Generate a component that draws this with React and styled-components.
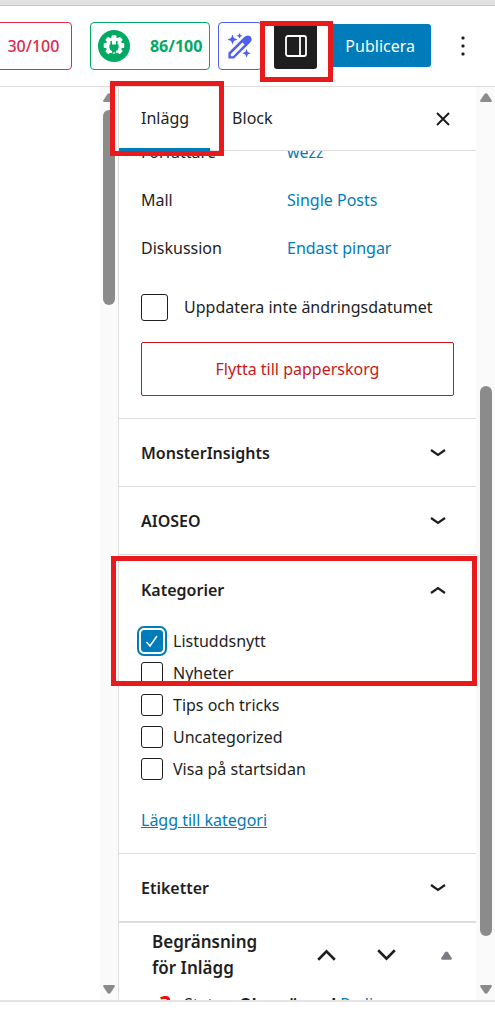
import React, { useState } from "react"
import styled, { createGlobalStyle, css } from "styled-components"

const BLUE = "#007cba"
const INK = "#1e1e1e"
const LINE = "#dddddd"
const MARK = "#e81a1c"

const GlobalStyle = createGlobalStyle`
  * {
    box-sizing: border-box;
  }
  body {
    margin: 0;
    background-color: white;
    color: ${INK};
    font-family: "Noto Sans", "Open Sans", sans-serif;
    font-size: 16px;
    line-height: 24px;
  }
  button {
    font: inherit;
    color: inherit;
    background: none;
    border: 0;
    padding: 0;
    cursor: pointer;
  }
  a {
    color: ${BLUE};
  }
`

const Page = styled.div`
  display: flex;
  flex-direction: column;
  height: 100vh;
  padding-bottom: 22px;
  overflow: hidden;
`

const Toolbar = styled.header`
  display: flex;
  flex-shrink: 0;
  align-items: center;
  justify-content: flex-end;
  gap: 12px;
  height: 87px;
  padding-right: 12px;
  border-top: 5px solid #e1e1e1;
  border-bottom: 1px solid ${LINE};
  box-shadow: inset 0 1px 0 #c8c8c8;
  > * {
    flex-shrink: 0;
  }
`

const Scores = styled.div`
  display: flex;
  gap: 18px;
`

const ScoreGroup = styled.div`
  display: flex;
  gap: 8px;
`

const ScoreButton = styled.button`
  display: flex;
  align-items: center;
  justify-content: ${({ $end }) => ($end ? "flex-end" : "space-between")};
  width: ${({ $narrow }) => ($narrow ? "44px" : "120px")};
  height: 48px;
  padding: 0 ${({ $end }) => ($end ? "12px" : "7px")};
  color: ${({ $color }) => $color};
  border: 1px solid ${({ $color }) => $color};
  border-radius: 4px;
  font-weight: ${({ $bold }) => ($bold ? 700 : 500)};
  svg {
    flex-shrink: 0;
  }
`

const MarkedItem = styled.div`
  position: relative;
  display: flex;
`

const Marker = styled.span`
  position: absolute;
  z-index: 2;
  inset: ${({ $inset }) => $inset};
  ${({ $height }) => $height && css`
    height: ${$height};
  `}
  border: 5px solid ${MARK};
  pointer-events: none;
`

const SettingsToggle = styled.button`
  display: flex;
  align-items: center;
  justify-content: center;
  width: 43px;
  height: 46px;
  border-radius: 3px;
  color: white;
  background-color: ${INK};
`

const PublishButton = styled.button`
  height: 43px;
  padding: 0 16px;
  border-radius: 3px;
  color: white;
  background-color: ${BLUE};
`

const IconButton = styled.button`
  display: flex;
  align-items: center;
  justify-content: center;
  width: 40px;
  height: 40px;
`

const Workspace = styled.main`
  display: flex;
  flex: 1;
  min-height: 0;
  border-bottom: 2px solid #e4e4e4;
`

const Canvas = styled.section`
  flex: 1;
`

const Track = styled.div`
  display: flex;
  flex-direction: column;
  flex-shrink: 0;
  align-items: center;
  width: ${({ $width }) => $width};
  padding: 6px 0;
  background-color: #fafafa;
`

const Thumb = styled.div`
  width: 12px;
  border-radius: 6px;
  background-color: #8b8b8b;
`

const Space = styled.div``

const Sidebar = styled.aside`
  display: flex;
  flex-direction: column;
  width: 358px;
  flex-shrink: 0;
  border-left: 1px solid ${LINE};
`

const TabBar = styled.div`
  display: flex;
  align-items: stretch;
  flex-shrink: 0;
  height: 64px;
  padding-right: 13px;
  border-bottom: 1px solid ${LINE};
`

const Tab = styled.button`
  height: 64px;
  padding: 0 21px 0 22px;
  border-bottom: 3px solid ${({ $active }) => ($active ? BLUE : "transparent")};
`

const CloseButton = styled(IconButton)`
  align-self: center;
  margin-left: auto;
`

const Scroller = styled.div`
  flex: 1;
  min-height: 0;
  overflow-y: clip;
`

const Summary = styled.section`
  margin-top: -23px;
  padding: 0 22px 22px;
`

const SummaryRow = styled.div`
  display: flex;
  align-items: center;
  height: 48px;
`

const SummaryLabel = styled.span`
  width: 146px;
`

const SummaryLink = styled.a`
  text-decoration: none;
`

const Check = styled.label`
  display: flex;
  align-items: center;
  gap: ${({ $large }) => ($large ? "16px" : "10px")};
  height: ${({ $large }) => ($large ? "70px" : "32px")};
`

const Box = styled.input`
  appearance: none;
  flex-shrink: 0;
  width: ${({ $large }) => ($large ? "27px" : "22px")};
  height: ${({ $large }) => ($large ? "27px" : "22px")};
  margin: 0;
  border: 1px solid ${INK};
  border-radius: 3px;
  background-color: white;
  &:checked {
    border-color: ${BLUE};
    background: ${BLUE}
      url("data:image/svg+xml,%3Csvg xmlns='http://www.w3.org/2000/svg' viewBox='0 0 20 20'%3E%3Cpath d='M4.5 11l3.5 4L15 5' fill='none' stroke='white' stroke-width='1.5'/%3E%3C/svg%3E")
      center / 20px no-repeat;
    box-shadow: 0 0 0 2px white, 0 0 0 4px ${BLUE};
  }
`

const TrashButton = styled.button`
  width: 100%;
  height: 54px;
  color: #cc1818;
  border: 1px solid #cc1818;
  border-radius: 2px;
`

const Panel = styled.section`
  position: relative;
  border-top: 1px solid ${LINE};
`

const PanelToggle = styled.button`
  display: flex;
  align-items: center;
  justify-content: space-between;
  width: 100%;
  height: ${({ $open }) => ($open ? "70px" : "67px")};
  padding: 0 30px 0 22px;
  font-weight: 600;
`

const PanelBody = styled.div`
  padding: 0 22px 21px;
`

const AddLink = styled.a`
  display: block;
  width: fit-content;
  margin-top: 23px;
`

const MetaBox = styled.section`
  border-top: 2px solid ${LINE};
`

const MetaHeader = styled.div`
  display: flex;
  align-items: center;
  justify-content: space-between;
  height: 64px;
  padding: 0 10px 0 33px;
`

const MetaTitle = styled.h2`
  max-width: 130px;
  margin: 0;
  font-size: 17px;
  line-height: 26px;
  font-weight: 600;
`

const MetaActions = styled.div`
  display: flex;
  gap: 20px;
`

const MetaStatus = styled.p`
  display: flex;
  gap: 4px;
  margin: 5px 0 0 41px;
  a {
    text-decoration: none;
  }
`

const Question = styled.b`
  width: 20px;
  color: red;
  font-size: 22px;
  line-height: 20px;
`

const GearPlugIcon = () => (
  <svg width="32" height="32" viewBox="0 0 32 32">
    <circle cx="16" cy="16" r="16" fill="#00aa63" />
    <g fill="white">
      <circle cx="16" cy="15.5" r="8.2" />
      {[0, 45, 90, 135, 225, 270, 315].map(a => (
        <rect
          key={a}
          x="13.6"
          y="5.2"
          width="4.8"
          height="5"
          rx="1"
          transform={`rotate(${a} 16 15.5)`}
        />
      ))}
    </g>
    <path
      fill="#00aa63"
      d="M12.4 11.2q.8-.8 1.6 0v3.4h4v-3.4q.8-.8 1.6 0v3.4h1v2.8q0 2.4-2.8 3.6l1 4.4h-1.4v-3h-2.8v3h-1.4l1-4.4q-2.8-1.2-2.8-3.6v-2.8h1z"
    />
  </svg>
)

const WandIcon = () => (
  <svg width="28" height="28" viewBox="0 0 28 28" fill="currentColor">
    <path
      fillRule="evenodd"
      d="M2.400 20.800 18.200 5Q21.500 2 24.600 4.600q2.400 3.200-.6 6.200L8 26.600H2.400zM4.800 22v2.200H7L18.600 12.600l-2.200-2.200z"
    />
    <path d="m6.500 2.500 1.400 3.600 3.600 1.400-3.600 1.400-1.400 3.600-1.400-3.600-3.600-1.400 3.600-1.400z" />
    <path d="m13.500 1 .9 1.900 1.900.9-1.900.9-.9 1.900-.9-1.900-1.900-.9 1.900-.9z" />
    <path d="m20.500 17 1.200 3 3 1.200-3 1.200-1.200 3-1.200-3-3-1.200 3-1.200z" />
  </svg>
)

const SidebarIcon = () => (
  <svg width="22" height="22" viewBox="0 0 22 22" fill="none" stroke="currentColor">
    <rect x="1" y="1" width="20" height="20" rx="2" strokeWidth="1.8" />
    <path d="M15 1v20" strokeWidth="1.8" />
  </svg>
)

const DotsIcon = () => (
  <svg width="4" height="20" viewBox="0 0 4 20" fill={INK}>
    <rect x="0.5" y="0.5" width="3" height="3" rx="1" />
    <rect x="0.5" y="8.5" width="3" height="3" rx="1" />
    <rect x="0.5" y="16.5" width="3" height="3" rx="1" />
  </svg>
)

const CloseIcon = () => (
  <svg width="14" height="14" viewBox="0 0 14 14" stroke={INK} strokeWidth="2">
    <path d="m1 1 12 12M13 1 1 13" />
  </svg>
)

const Chevron = ({ up, large }) => (
  <svg
    width={large ? 19 : 16}
    height={large ? 12 : 10}
    viewBox="0 0 16 10"
    fill="none"
    stroke={INK}
    strokeWidth="2.2"
  >
    {large ? (
      <path d={up ? "m1 9 7-7 7 7" : "m1 1 7 7 7-7"} />
    ) : (
      <path d={up ? "m1 8 7-5 7 5" : "m1 2 7 5 7-5"} />
    )}
  </svg>
)

const Triangle = ({ down, size = 12, color = "#8b8b8b" }) => (
  <svg width={size} height="9" viewBox="0 0 12 9">
    <path
      d={
        down
          ? "M1 0h10q1.5.5.5 2L7.5 8q-1.5 1.5-3 0L.5 2Q-.5.5 1 0z"
          : "M1 9h10q1.5-.5.5-2L7.5 1q-1.5-1.5-3 0L.5 7Q-.5 8.5 1 9z"
      }
      fill={color}
    />
  </svg>
)

const Scrollbar = ({ width, before, thumb, after }) => (
  <Track $width={width} aria-hidden="true">
    <Triangle />
    <Space style={{ flexGrow: before }} />
    <Thumb style={{ flexGrow: thumb }} />
    <Space style={{ flexGrow: after }} />
    <Triangle down />
  </Track>
)

const CollapsiblePanel = ({ title, marked, defaultOpen = false, children }) => {
  const [open, setOpen] = useState(defaultOpen)
  return (
    <Panel>
      <PanelToggle
        $open={open}
        aria-expanded={open}
        onClick={() => setOpen(!open)}
      >
        {title}
        <Chevron up={open} />
      </PanelToggle>
      {open && children ? <PanelBody>{children}</PanelBody> : null}
      {marked && <Marker $inset="1px -1px auto -8px" $height="130px" />}
    </Panel>
  )
}

const CATEGORIES = [
  "Listuddsnytt",
  "Nyheter",
  "Tips och tricks",
  "Uncategorized",
  "Visa på startsidan",
]

const SUMMARY = [
  ["Författare", "wezz"],
  ["Mall", "Single Posts"],
  ["Diskussion", "Endast pingar"],
]

const App = () => (
  <>
    <GlobalStyle />
    <Page>
      <Toolbar>
        <Scores>
          <ScoreButton $color="#df2a4a" $end>
            30/100
          </ScoreButton>
          <ScoreGroup>
            <ScoreButton $color="#00aa63" $bold>
              <GearPlugIcon />
              86/100
            </ScoreButton>
            <ScoreButton $color="#4f5ff0" $narrow aria-label="AI">
              <WandIcon />
            </ScoreButton>
          </ScoreGroup>
        </Scores>
        <MarkedItem>
          <SettingsToggle aria-label="Inställningar">
            <SidebarIcon />
          </SettingsToggle>
          <Marker $inset="-2px -16px -13px -14px" />
        </MarkedItem>
        <PublishButton>Publicera</PublishButton>
        <IconButton aria-label="Alternativ">
          <DotsIcon />
        </IconButton>
      </Toolbar>
      <Workspace>
        <Canvas />
        <Scrollbar width="18px" before={8} thumb={195} after={680} />
        <Sidebar>
          <TabBar>
            <MarkedItem>
              <Tab $active>Inlägg</Tab>
              <Marker $inset="-6px -14px -6px -9px" />
            </MarkedItem>
            <Tab>Block</Tab>
            <CloseButton aria-label="Stäng">
              <CloseIcon />
            </CloseButton>
          </TabBar>
          <Scroller>
            <Summary>
              {SUMMARY.map(([label, value]) => (
                <SummaryRow key={label}>
                  <SummaryLabel>{label}</SummaryLabel>
                  <SummaryLink href="#">{value}</SummaryLink>
                </SummaryRow>
              ))}
              <Check $large>
                <Box type="checkbox" $large />
                Uppdatera inte ändringsdatumet
              </Check>
              <TrashButton>Flytta till papperskorg</TrashButton>
            </Summary>
            <CollapsiblePanel title="MonsterInsights" />
            <CollapsiblePanel title="AIOSEO" />
            <CollapsiblePanel title="Kategorier" marked defaultOpen>
              {CATEGORIES.map((name, i) => (
                <Check key={name}>
                  <Box type="checkbox" defaultChecked={i === 0} />
                  {name}
                </Check>
              ))}
              <AddLink href="#">Lägg till kategori</AddLink>
            </CollapsiblePanel>
            <CollapsiblePanel title="Etiketter" />
            <MetaBox>
              <MetaHeader>
                <MetaTitle>Begränsning för Inlägg</MetaTitle>
                <MetaActions>
                  <IconButton aria-label="Flytta upp">
                    <Chevron up large />
                  </IconButton>
                  <IconButton aria-label="Flytta ned">
                    <Chevron large />
                  </IconButton>
                  <IconButton aria-label="Växla panel">
                    <Triangle size={11} color="#787c82" />
                  </IconButton>
                </MetaActions>
              </MetaHeader>
              <MetaStatus>
                <Question>?</Question>
                <span>Status:</span>
                <b>Obegränsad</b>
                <a href="#">Redigera</a>
              </MetaStatus>
            </MetaBox>
          </Scroller>
        </Sidebar>
        <Scrollbar width="19px" before={284} thumb={549} after={49} />
      </Workspace>
    </Page>
  </>
)

export default App
